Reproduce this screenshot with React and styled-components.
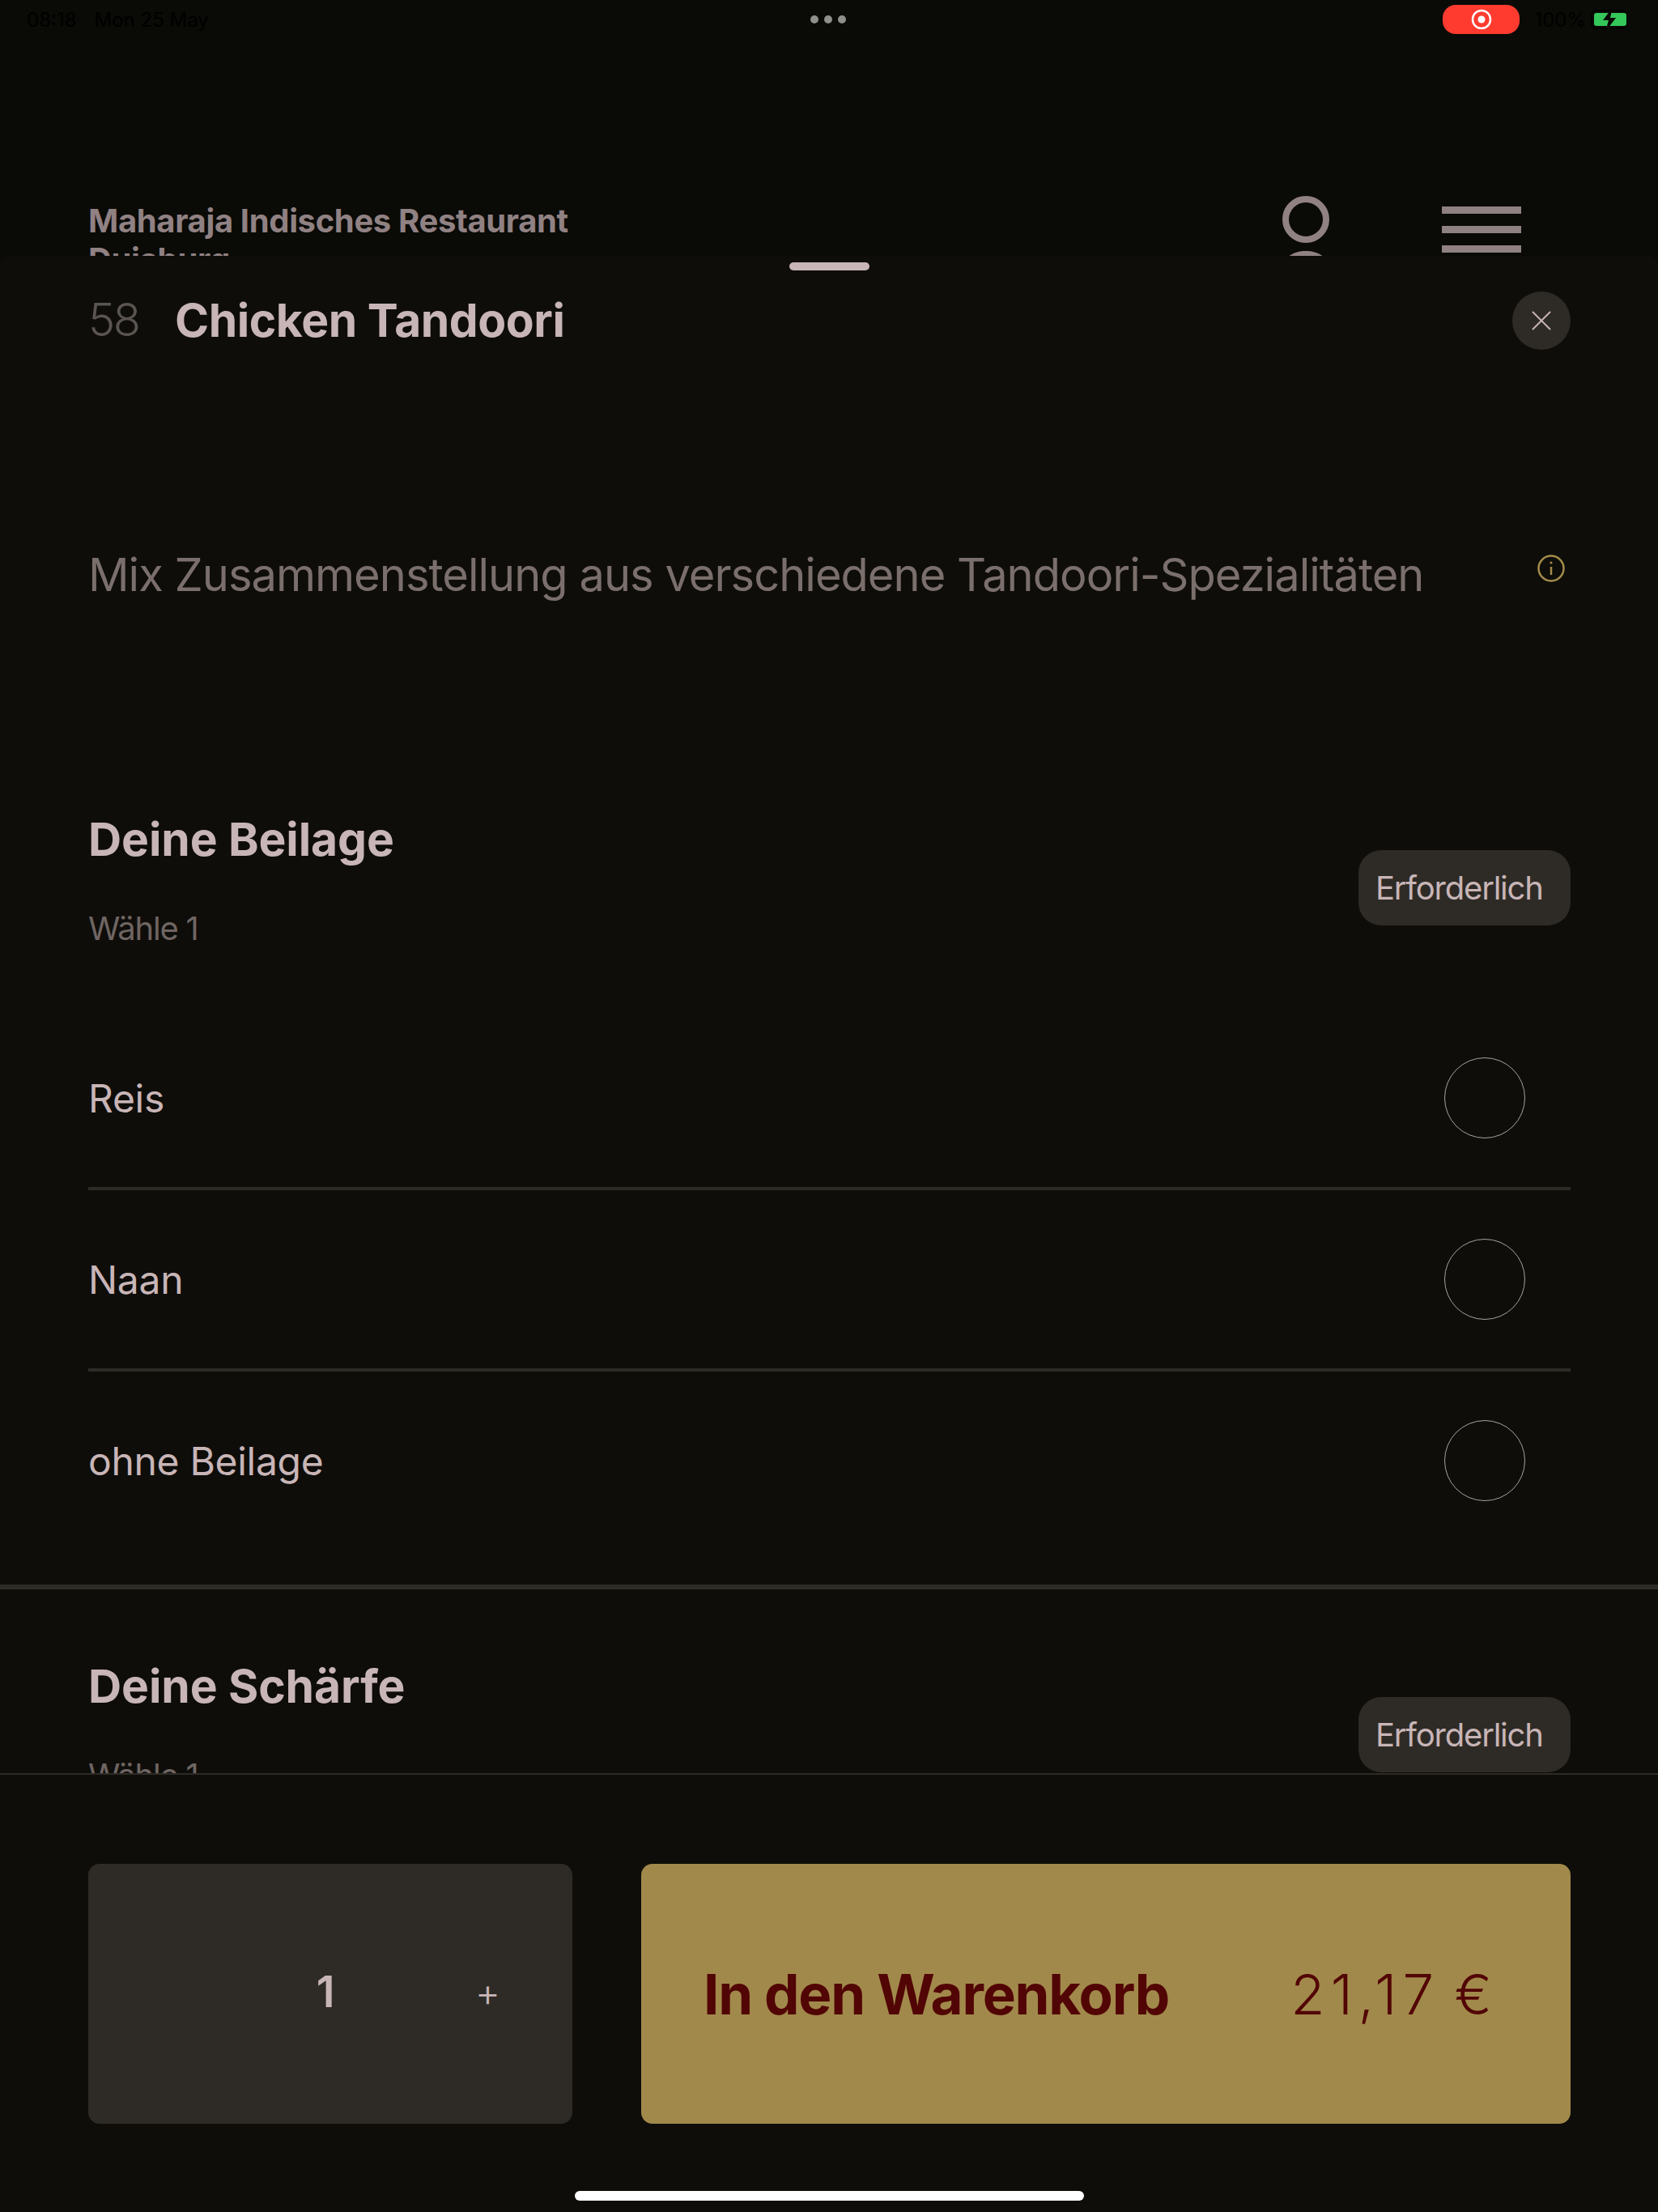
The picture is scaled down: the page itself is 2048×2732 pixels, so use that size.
import styled, { createGlobalStyle } from "styled-components";
import { X } from "lucide-react";

const GlobalStyle = createGlobalStyle`
  html, body {
    margin: 0;
    padding: 0;
    background: #0a0a06;
  }
  * {
    box-sizing: border-box;
  }
`;

const Screen = styled.div`
  position: relative;
  width: 2048px;
  height: 2732px;
  overflow: hidden;
  background: #0a0a06;
  font-family: Inter, "Liberation Sans", sans-serif;
  color: #c8b5b7;
`;

const StatusBar = styled.div`
  display: flex;
  align-items: center;
  justify-content: space-between;
  height: 48px;
  padding: 0 35px 0 33px;
  color: #000;
  font-size: 24px;
`;

const StatusDate = styled.div`
  flex: 1;
  display: flex;
  gap: 22px;
`;

const Dots = styled.div`
  display: flex;
  gap: 7px;
`;

const Dot = styled.span`
  width: 10px;
  height: 10px;
  border-radius: 50%;
  background: #8f8f8b;
`;

const StatusRight = styled.div`
  flex: 1;
  display: flex;
  align-items: center;
  justify-content: flex-end;
  gap: 18px;
`;

const RecordPill = styled.div`
  display: flex;
  align-items: center;
  justify-content: center;
  width: 95px;
  height: 36px;
  border-radius: 16px;
  background: #ff3b30;
`;

const Battery = styled.div`
  display: flex;
  align-items: center;
  gap: 6px;
`;

const PageHeader = styled.header`
  display: flex;
  justify-content: space-between;
  align-items: flex-start;
  padding: 194px 169px 0 109px;
  color: #908183;
`;

const RestaurantName = styled.h1`
  margin: 7px 0 0;
  width: 640px;
  font-size: 40px;
  line-height: 48px;
  font-weight: 700;
  letter-spacing: -0.36px;
`;

const HeaderIcons = styled.div`
  display: flex;
  gap: 139px;
`;

const MenuBars = styled.div`
  display: flex;
  flex-direction: column;
  gap: 15px;
  width: 98px;
  padding-top: 13px;
`;

const MenuBar = styled.span`
  height: 9px;
  background: #908183;
`;

const Sheet = styled.section`
  position: absolute;
  top: 316px;
  left: 0;
  right: 0;
  bottom: 0;
  display: flex;
  flex-direction: column;
  border-radius: 10px 10px 0 0;
  background: #0e0d09;
`;

const Handle = styled.div`
  flex: none;
  width: 99px;
  height: 10px;
  margin: 8px auto 26px;
  border-radius: 5px;
  background: #c8b5b7;
`;

const Scroller = styled.div`
  flex: 1;
  min-height: 0;
  overflow: hidden;
`;

const TitleRow = styled.div`
  display: flex;
  align-items: center;
  height: 72px;
  padding: 0 108px 0 109px;
`;

const ItemNumber = styled.span`
  width: 107px;
  margin-bottom: 2px;
  font-size: 56px;
  font-weight: 300;
  letter-spacing: -2.4px;
  color: #5a5450;
`;

const ItemTitle = styled.h2`
  flex: 1;
  margin: 0 0 2px;
  font-size: 57px;
  font-weight: 700;
  letter-spacing: -0.45px;
`;

const CloseButton = styled.button`
  display: flex;
  align-items: center;
  justify-content: center;
  width: 72px;
  height: 72px;
  padding: 0;
  border: 0;
  border-radius: 50%;
  background: #2e2b26;
  color: #c8b5b7;
`;

const DescriptionRow = styled.div`
  display: flex;
  justify-content: space-between;
  align-items: flex-start;
  margin-top: 238px;
  padding: 0 115px 0 109px;
  height: 80px;
`;

const Description = styled.p`
  margin: 0;
  font-size: 56px;
  line-height: 80px;
  letter-spacing: -0.98px;
  color: #7a6f6c;
`;

const InfoWrap = styled.div`
  margin-top: 15px;
  line-height: 0;
`;

const Section = styled.div`
  margin-top: 247px;
  padding: 0 108px 0 109px;
`;

const NextSection = styled.div`
  margin-top: 39px;
  padding: 80px 108px 0 109px;
  border-top: 6px solid #2e2b26;
`;

const SectionHeader = styled.div`
  display: flex;
  justify-content: space-between;
  align-items: center;
  height: 198px;
`;

const SectionHeading = styled.div`
  align-self: flex-start;
`;

const SectionTitle = styled.h3`
  margin: 0;
  font-size: 57px;
  line-height: 80px;
  font-weight: 700;
  letter-spacing: -0.1px;
`;

const SectionHint = styled.div`
  margin-top: 45px;
  font-size: 40px;
  line-height: 50px;
  letter-spacing: -1.2px;
  color: #6f6562;
`;

const RequiredPill = styled.div`
  display: flex;
  align-items: center;
  height: 93px;
  width: 262px;
  padding-left: 21px;
  border-radius: 28px;
  background: #2e2b26;
  font-size: 40px;
  letter-spacing: -1.2px;
`;

const OptionList = styled.div`
  margin-top: 51px;
`;

const Option = styled.div`
  display: flex;
  align-items: center;
  justify-content: space-between;
  height: 224px;
  padding-right: 56px;
  font-size: 48px;
  letter-spacing: -0.3px;
  border-bottom: 4px solid ${(p) => (p.$last ? "transparent" : "#2e2b26")};
`;

const Radio = styled.span`
  width: 100px;
  height: 100px;
  border: 1.5px solid #a9a29d;
  border-radius: 50%;
`;

const Footer = styled.footer`
  flex: none;
  display: flex;
  gap: 85px;
  height: 542px;
  padding: 110px 108px 0 109px;
  border-top: 2px solid #2e2b26;
  background: #0e0d09;
`;

const Quantity = styled.div`
  display: flex;
  align-items: center;
  justify-content: flex-end;
  width: 598px;
  height: 321px;
  padding-right: 89px;
  border-radius: 14px;
  background: #2e2b26;
`;

const QuantityValue = styled.span`
  margin-right: 173px;
  margin-bottom: 6px;
  font-size: 54px;
  font-weight: 600;
`;

const PlusSign = styled.span`
  margin-bottom: 4px;
  font-size: 48px;
  font-weight: 300;
`;

const AddButton = styled.button`
  flex: 1;
  display: flex;
  align-items: center;
  justify-content: space-between;
  height: 321px;
  padding: 0 90px 0 77px;
  border: 0;
  border-radius: 14px;
  background: #a1894b;
  color: #520505;
  font-family: inherit;
  font-size: 69px;
`;

const AddLabel = styled.span`
  font-weight: 700;
  letter-spacing: -1.2px;
`;

const Price = styled.span`
  font-weight: 300;
  letter-spacing: 7px;
  word-spacing: -8px;
`;

const HomeBar = styled.div`
  position: absolute;
  left: 710px;
  bottom: 14px;
  width: 629px;
  height: 12px;
  border-radius: 6px;
  background: #fff;
`;

const options = ["Reis", "Naan", "ohne Beilage"];

export default function App() {
  return (
    <Screen>
      <GlobalStyle />
      <StatusBar>
        <StatusDate>
          <span>08:18</span>
          <span>Mon 25 May</span>
        </StatusDate>
        <Dots>
          <Dot />
          <Dot />
          <Dot />
        </Dots>
        <StatusRight>
          <RecordPill>
            <svg width="28" height="28" viewBox="0 0 28 28">
              <circle cx="14" cy="14" r="11" fill="none" stroke="#fff" strokeWidth="2.5" />
              <circle cx="14" cy="14" r="4.5" fill="#fff" />
            </svg>
          </RecordPill>
          <Battery>
            <span>100%</span>
            <svg width="48" height="32" viewBox="0 0 48 32">
              <rect x="1" y="5" width="43" height="22" rx="6" fill="none" stroke="#000" strokeWidth="1.5" />
              <rect x="4" y="8" width="40" height="16" rx="3" fill="#34c759" />
              <path d="M27 1 L15 17 H22 L18 31 L31 14 H24 Z" fill="#050503" />
            </svg>
          </Battery>
        </StatusRight>
      </StatusBar>

      <PageHeader>
        <RestaurantName>Maharaja Indisches Restaurant Duisburg</RestaurantName>
        <HeaderIcons>
          <svg width="58" height="100" viewBox="0 0 58 100" fill="#908183">
            <circle cx="29" cy="29" r="25" fill="none" stroke="#908183" strokeWidth="8" />
            <path d="M0 90 C0 76 14 68 29 68 C44 68 58 76 58 90 Z" />
          </svg>
          <MenuBars>
            <MenuBar />
            <MenuBar />
            <MenuBar />
          </MenuBars>
        </HeaderIcons>
      </PageHeader>

      <Sheet>
        <Handle />
        <Scroller>
          <TitleRow>
            <ItemNumber>58</ItemNumber>
            <ItemTitle>Chicken Tandoori</ItemTitle>
            <CloseButton aria-label="Schließen">
              <X size={42} strokeWidth={1.1} />
            </CloseButton>
          </TitleRow>

          <DescriptionRow>
            <Description>Mix Zusammenstellung aus verschiedene Tandoori-Spezialitäten</Description>
            <InfoWrap>
              <svg width="34" height="34" viewBox="0 0 34 34" fill="none" stroke="#a38c4a">
                <circle cx="17" cy="17" r="15.5" strokeWidth="2.5" />
                <path d="M17 15 V25" strokeWidth="2.5" />
                <circle cx="17" cy="10" r="1.6" fill="#a38c4a" stroke="none" />
              </svg>
            </InfoWrap>
          </DescriptionRow>

          <Section>
            <SectionHeader>
              <SectionHeading>
                <SectionTitle>Deine Beilage</SectionTitle>
                <SectionHint>Wähle 1</SectionHint>
              </SectionHeading>
              <RequiredPill>Erforderlich</RequiredPill>
            </SectionHeader>
            <OptionList>
              {options.map((name, i) => (
                <Option key={name} $last={i === options.length - 1}>
                  <span>{name}</span>
                  <Radio />
                </Option>
              ))}
            </OptionList>
          </Section>

          <NextSection>
            <SectionHeader>
              <SectionHeading>
                <SectionTitle>Deine Schärfe</SectionTitle>
                <SectionHint>Wähle 1</SectionHint>
              </SectionHeading>
              <RequiredPill>Erforderlich</RequiredPill>
            </SectionHeader>
          </NextSection>
        </Scroller>

        <Footer>
          <Quantity>
            <QuantityValue>1</QuantityValue>
            <PlusSign>+</PlusSign>
          </Quantity>
          <AddButton>
            <AddLabel>In den Warenkorb</AddLabel>
            <Price>21,17 €</Price>
          </AddButton>
        </Footer>
        <HomeBar />
      </Sheet>
    </Screen>
  );
}
